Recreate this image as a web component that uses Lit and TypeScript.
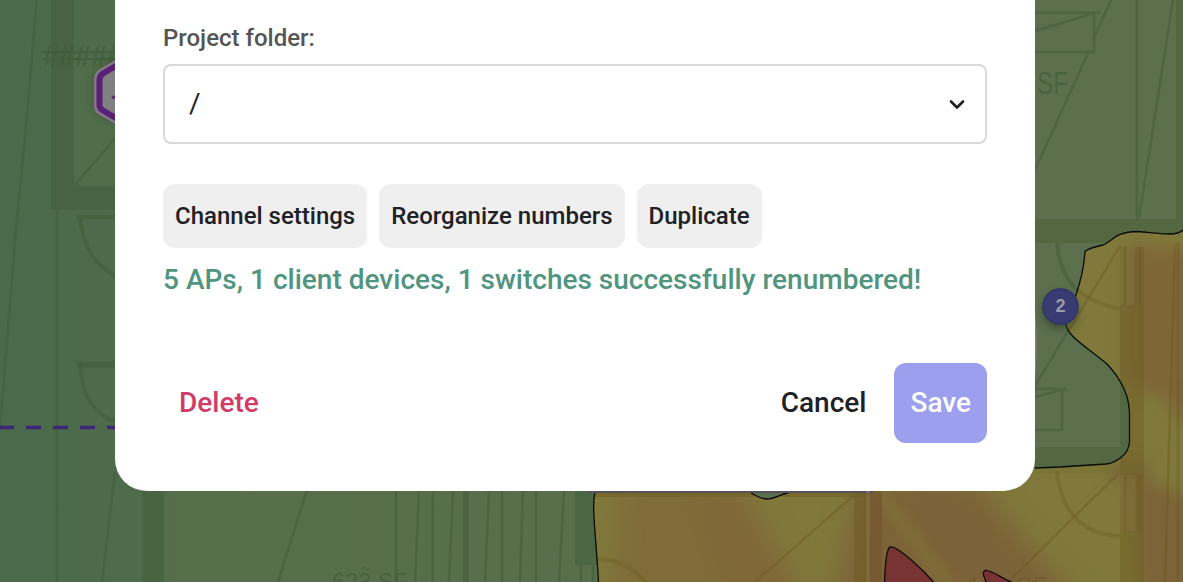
import { LitElement, html, css, svg } from "lit";
import { customElement, property } from "lit/decorators.js";

@customElement("floor-map")
class FloorMap extends LitElement {
  static styles = css`
    :host { display: block; width: 1183px; height: 582px; }
    svg { display: block; }
    .wall { fill: #43603c; fill-opacity: 0.62; }
    .wall-soft { fill: #4c6238; fill-opacity: 0.6; }
    .line { fill: none; stroke: #425d39; stroke-opacity: 0.55; stroke-width: 2.5; }
    .tilde { fill: none; stroke: #425d39; stroke-opacity: 0.55; stroke-width: 1.2; }
    .door { fill: none; stroke: #425d39; stroke-opacity: 0.55; stroke-width: 4; }
    .warm { fill: none; stroke: #6b5720; stroke-opacity: 0.4; stroke-width: 2.5; }
    .warm-door { fill: none; stroke: #6b5f20; stroke-opacity: 0.4; stroke-width: 4; }
    .contour { fill: none; stroke: #090b06; stroke-width: 1.3; }
    .area { font-family: "Liberation Sans", Arial, sans-serif; fill: #425d39; fill-opacity: 0.7; }
    .hatch { stroke: #425d39; stroke-opacity: 0.5; stroke-width: 0.8; }
    .count { font: 700 18px "Liberation Sans", Arial, sans-serif; fill: #9b9ba8; text-anchor: middle; }
  `;

  render() {
    const hot = "M1183 230C1176 237 1157 233 1138 231.500C1114 232 1113 241 1103 245C1093 247 1088 249 1085 251.500C1084 269 1079 286 1076 295L1066 322C1064 335 1090 349 1107 364C1121 379 1129.500 395 1129.500 414V442C1129 455 1115 463 1106 464L1060 467L1035 468L1000 470V480H870V493H791C781 494 774 499 767 499C760 499 755 495 751 493H595C591 505 597 545 598.500 582H1183Z";
    return html`${svg`
    <svg width="1183" height="582" viewBox="0 0 1183 582">
      <defs>
        <linearGradient id="base" x1="0" x2="1" y1="0" y2="0">
          <stop offset="0" stop-color="#4a6a4b"/><stop offset=".13" stop-color="#4f6c4b"/>
          <stop offset=".15" stop-color="#576e4b"/><stop offset="1" stop-color="#5c704e"/>
        </linearGradient>
        <clipPath id="hotClip"><path d=${hot}/></clipPath>
        <filter id="b8" x="-50%" y="-50%" width="200%" height="200%"><feGaussianBlur stdDeviation="8"/></filter>
        <filter id="b14" x="-50%" y="-50%" width="200%" height="200%"><feGaussianBlur stdDeviation="14"/></filter>
        <filter id="b4" x="-50%" y="-50%" width="200%" height="200%"><feGaussianBlur stdDeviation="4"/></filter>
      </defs>
      <rect width="1183" height="582" fill="url(#base)"/>
      <rect x="74" y="60" width="60" height="126" fill="#536d48" opacity=".5"/>
      <rect x="142" y="480" width="22" height="102" class="wall"/>
      <path class="wall" d="M51 0H74V186H115V210H51Z"/>
      <path class="line" d="M37-4C30 85 20 190 15 240L0 430M57 210V582M75 185L117 136M115 472L102 582"/>
      <path class="door" d="M77 217H115M80 217C82 244 94 265 117 277M80 364C82 398 94 414 117 423"/>
      <path d="M77 364.500H117" stroke="#3f5a39" stroke-opacity=".5" stroke-width="6"/>
      <text class="area hatch" x="43" y="66" font-size="29" textLength="80" lengthAdjust="spacingAndGlyphs">#####</text>

      <path class="line" d="M307 490L278 582M396 490V582M419 490L415 582M433 490V582M453 490L449 582M489 490L485 582M502 490V582M523 490L520 582M536 490V582M564 490L559 582M581 564V582M593 564V582"/>
      <path d="M466 490V582" stroke="#415b39" stroke-opacity=".55" stroke-width="6"/>
      <rect class="wall" x="575" y="490" width="30" height="75"/>
      <text class="area" x="332" y="590" font-size="24" textLength="76" lengthAdjust="spacingAndGlyphs">623 SF</text>
      <path d="M362 568.500q2-2 4 0t4-1" class="tilde"/>

      <path class="line" d="M1035 12.500H1101M1035 52H1094V14M1035 31L1094 13M1111 0L1094 38M1088 53L1035 170M1137 0V220M1173 0L1139 218"/>
      <rect class="wall-soft" x="1035" y="219" width="148" height="24"/><rect class="wall-soft" x="1176" y="0" width="7" height="219"/>
      <text class="area" x="1037" y="94" font-size="31" textLength="31" lengthAdjust="spacingAndGlyphs">SF</text>
      <text class="area" x="1036" y="30" font-size="9" fill-opacity=".12" opacity=".3">60 SF</text>
      <path class="door" d="M1057 243C1060 280 1078 300 1120 309"/>
      <path class="line" d="M1119 246L1035 386M1035 389H1067M1035 397L1064 389M1062 390V430H1035"/>
      <path class="wall-soft" d="M1120 305H1145V470H1035V447H1120Z"/>

      <g clip-path="url(#hotClip)">
        <rect x="585" y="225" width="600" height="360" fill="#80793b"/>
        <g filter="url(#b8)">
          <rect x="1136" y="248" width="74" height="145" fill="#7f6637"/>
          <rect x="1124" y="242" width="22" height="140" fill="#7b6436" opacity=".6"/>
          <path d="M1150 380H1200V430L1180 420Z" fill="#7e6537"/>
          <path d="M1135 478L1200 500V600H1140Z" fill="#7c6337"/>
          <path d="M1112 462H1150V480H1104Z" fill="#775b31" opacity=".6"/>
        </g>
        <g filter="url(#b14)">
          <path d="M620 480H738L800 610H610Z" fill="#7f6c38"/>
          <path d="M690 480H738L812 610H730Z" fill="#806737"/>
          <path d="M862 470L975 480L1085 610H830Z" fill="#7d6437"/>
          <path d="M900 480L965 480L1060 610H960Z" fill="#7c6237"/>
        </g>
        <path d="M875 488L950 586" stroke="#806f38" stroke-width="15" opacity=".7" filter="url(#b4)"/>
        <rect x="590" y="493" width="280" height="4" fill="#706126" opacity=".6"/>
        <rect x="1120" y="305" width="24" height="277" fill="#6e5a22" opacity=".42"/>
        <rect x="1120" y="246" width="7" height="59" fill="#705d25" opacity=".2"/>
        <rect x="1137" y="247" width="7" height="58" fill="#705728" opacity=".3"/>
        <rect x="1120" y="475" width="17" height="56" fill="#887442" opacity=".4"/>
        <rect x="1035" y="464" width="108" height="10" fill="#706b2f" opacity=".2"/>
        <path class="warm" d="M1120 246L1060 345M1125 247V305M1136 247V305M1140 247V305M1178 242V582M1175 245L1165 582M1118 474L1008 582M1125 474V531M1137 474V531M1140 474V531M853 496L755 582"/>
        <path class="warm-door" d="M1057 243C1060 280 1078 300 1120 309M1057 471C1060 508 1080 535 1120 536M596 559C617 558 633 567 647 584"/>
        <rect x="854" y="492" width="14" height="90" fill="#705e27" opacity=".6"/>
        <rect x="870" y="490" width="12" height="92" fill="#704e29" opacity=".5"/>
        <path d="M868 490V582" stroke="#847140" stroke-width="3" opacity=".7"/>
        <text x="967" y="595" font-size="25" font-family="Liberation Sans" fill="#604822" opacity=".3">101 SF</text>
      </g>
      <path class="contour" d="M1183 230C1176 237 1157 233 1138 231.500C1114 232 1113 241 1103 245C1093 247 1088 249 1085 251.500C1084 269 1079 286 1076 295L1066 322C1064 335 1090 349 1107 364C1121 379 1129.500 395 1129.500 414V442C1129 455 1115 463 1106 464L1060 467L1035 468M595 493C591 505 597 545 598.500 584M751 493C755 495 760 499 767 499C774 499 781 494 791 492"/>
      <path d="M588 491.500H873" stroke="#55515a" stroke-width="3"/>
      <path d="M868 490V493" stroke="#77727d" stroke-width="3"/>
      <path d="M884.500 584C885 566 886 549 890 547C896 545 922 568 937 586Z" fill="#783433" stroke="#100c09" stroke-width="1.400"/>
      <path d="M987 584C985 578 981 573 985 570.500C990 569 1004 580 1016 584Z" fill="#783433" stroke="#100c09" stroke-width="1.400"/>
      <path d="M-1 427.500H116" stroke="#3d2578" stroke-width="3.500" stroke-dasharray="15 12"/>
      <path d="M1035 313C1037 318 1037 370 1035 376Z" fill="#827f87"/>

      <path d="M120 58L101 69Q95 73 95 80V105Q95 110 100 113L120 125Z" fill="#294026" opacity=".6" filter="url(#b4)"/>
      <path d="M122 56L99 69.500Q94 73 94 79V106Q94 111 98 114L122 128Z" fill="#857786"/>
      <path d="M120 63.500L103 73.500Q99.500 76 99.500 80V105Q99.500 108.500 103 110.500L120 120.500" fill="#808080" stroke="#592078" stroke-width="6"/>
      <path d="M112 98L117 96" stroke="#592078" stroke-width="2.500"/>
      <circle cx="1060" cy="311" r="18" fill="#283b22" opacity=".6" filter="url(#b4)"/>
      <circle cx="1060.500" cy="306.500" r="17.500" fill="#393c73" stroke="#30346b" stroke-width="1.500"/>
      <text class="count" x="1060.500" y="312">2</text>
    </svg>`}`;
  }
}

@customElement("dialog-button")
class DialogButton extends LitElement {
  @property({ reflect: true }) variant = "chip";
  static styles = css`
    :host { display: block; }
    button { box-sizing: border-box; display: flex; align-items: center; justify-content: center; border: 0; margin: 0; white-space: nowrap; background: transparent; color: #1e2125; font: 500 28px Roboto, sans-serif; height: 80px; padding: 0 16px 2px; border-radius: 12px; }
    :host([variant="chip"]) button { height: 64px; padding: 0 12px; font-size: 24px; background: #efefef; }
    :host([variant="danger"]) button { color: #cf3c68; }
    :host([variant="primary"]) button { color: #fff; background: #9b9fee; }
  `;
  render() { return html`<button><slot></slot></button>`; }
}

@customElement("app-root")
class AppRoot extends LitElement {
  static styles = css`
    :host { display: grid; width: 1183px; height: 582px; overflow: hidden; font-family: Roboto, sans-serif; }
    floor-map, .dialog { grid-area: 1 / 1; }
    .dialog { position: relative; box-sizing: border-box; width: 920px; height: 491px; margin-left: 115px; padding: 22px 48px 48px; background: #fff; border-radius: 0 0 32px 32px; display: flex; flex-direction: column; }
    .label { font-size: 24px; font-weight: 500; line-height: 32px; color: #555; margin-bottom: 10px; }
    .select { box-sizing: border-box; height: 80px; flex: none; border: 2px solid #d9d9d9; border-radius: 8px; padding: 0 19px 1px 24px; display: flex; align-items: center; justify-content: space-between; font-size: 28px; color: #1e2125; }
    .chips { display: flex; gap: 12px; margin-top: 40px; }
    .message { font-size: 28px; font-weight: 500; line-height: 40px; letter-spacing: 0.01px; color: #50957f; margin-top: 12px; white-space: nowrap; }
    .footer { margin-top: auto; display: flex; align-items: center; gap: 12px; }
    .spacer { flex: 1; }
  `;
  render() {
    return html`
      <floor-map></floor-map>
      <section class="dialog">
        <div class="label">Project folder:</div>
        <div class="select"><span>/</span>
          <svg width="18" height="14" viewBox="0 0 18 14"><path d="M3 4.500L9 10.500L15 4.500" fill="none" stroke="#1e2125" stroke-width="2.600" stroke-linecap="round" stroke-linejoin="round"/></svg>
        </div>
        <div class="chips">
          <dialog-button>Channel settings</dialog-button>
          <dialog-button>Reorganize numbers</dialog-button>
          <dialog-button>Duplicate</dialog-button>
        </div>
        <div class="message">5 APs, 1 client devices, 1 switches successfully renumbered!</div>
        <div class="footer">
          <dialog-button variant="danger">Delete</dialog-button>
          <div class="spacer"></div>
          <dialog-button variant="plain">Cancel</dialog-button>
          <dialog-button variant="primary">Save</dialog-button>
        </div>
      </section>`;
  }
}
